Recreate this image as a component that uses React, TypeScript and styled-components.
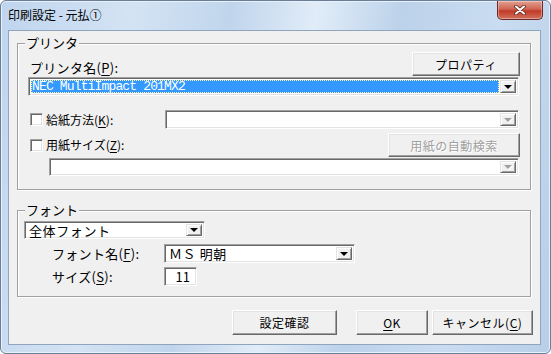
import styled, { createGlobalStyle } from "styled-components";

const UI = `"Noto Sans CJK JP", "DejaVu Sans", sans-serif`;
const MONO = `"Liberation Mono", "Noto Sans CJK JP", monospace`;

const GlobalStyle = createGlobalStyle`
  html, body {
    margin: 0;
    padding: 0;
    background: #ffffff;
  }
  * {
    box-sizing: border-box;
  }
`;

const Window = styled.div`
  width: 551px;
  height: 354px;
  display: flex;
  flex-direction: column;
  border: 1px solid #6a7f97;
  border-radius: 6px;
  background: linear-gradient(
    100deg,
    #bfd5ee 0%,
    #d4e3f4 22%,
    #c0d5ec 38%,
    #e1ecf8 52%,
    #bcd2ea 66%,
    #c9dcf1 82%,
    #b8cfe8 100%
  );
  box-shadow: inset 0 0 0 1px #e8f0fa;
  overflow: hidden;
`;

const TitleBar = styled.div`
  height: 29px;
  display: flex;
  align-items: flex-start;
  justify-content: space-between;
  padding-left: 7px;
`;

const Title = styled.div`
  margin-top: 7px;
  font-family: ${UI};
  font-size: 12px;
  line-height: 14px;
  color: #000;
`;

const CloseButton = styled.div`
  width: 46px;
  height: 19px;
  margin-right: 7px;
  display: flex;
  align-items: center;
  justify-content: center;
  border: 1px solid #6b2a26;
  border-top: none;
  border-radius: 0 0 5px 5px;
  background: linear-gradient(180deg, #e3a091 0%, #cf6454 45%, #c23a26 55%, #d0705d 100%);
  box-shadow: inset 0 0 0 1px rgba(255, 255, 255, 0.35);
`;

const Client = styled.div`
  margin-left: 7px;
  width: 533px;
  height: 315px;
  border: 1px solid #8fa5bd;
  background: #f0f0f0;
  display: flex;
  flex-direction: column;
  padding-left: 8px;
`;

const Group = styled.div<{ $h: number; $mt: number; $pad: string }>`
  position: relative;
  width: 514px;
  height: ${({ $h }) => $h}px;
  margin-top: ${({ $mt }) => $mt}px;
  padding: ${({ $pad }) => $pad};
  border: 1px solid #a0a0a0;
  box-shadow: inset 1px 1px 0 #ffffff, 1px 1px 0 #ffffff;
  display: flex;
  flex-direction: column;
`;

const Legend = styled.span`
  position: absolute;
  left: 7px;
  top: -9px;
  padding: 0 1px;
  background: #f0f0f0;
  font-family: ${UI};
  font-size: 13px;
  line-height: 16px;
  color: #000;
`;

const Row = styled.div<{ $h: number; $mt?: number; $ml?: number }>`
  display: flex;
  align-items: center;
  height: ${({ $h }) => $h}px;
  margin-top: ${({ $mt }) => $mt ?? 0}px;
  margin-left: ${({ $ml }) => $ml ?? 0}px;
`;

const Label = styled.span<{ $size?: number; $w?: number; $ml?: number; $self?: string }>`
  font-family: ${UI};
  font-size: ${({ $size }) => $size ?? 13}px;
  line-height: 16px;
  color: #000;
  white-space: nowrap;
  letter-spacing: ${({ $size }) => ($size === 12 ? 0 : 0.3)}px;
  width: ${({ $w }) => ($w ? `${$w}px` : "auto")};
  margin-left: ${({ $ml }) => $ml ?? 0}px;
  align-self: ${({ $self }) => $self ?? "auto"};
`;

const Mn = styled.span`
  text-decoration: underline;
  text-underline-offset: 2px;
`;

const Button = styled.div<{ $w: number; $h: number; $disabled?: boolean; $ml?: string }>`
  width: ${({ $w }) => $w}px;
  height: ${({ $h }) => $h}px;
  margin-left: ${({ $ml }) => $ml ?? "0"};
  display: flex;
  align-items: center;
  justify-content: center;
  background: #f0f0f0;
  border: 1px solid;
  border-color: #ffffff #696969 #696969 #ffffff;
  box-shadow: inset -1px -1px 0 #a0a0a0, inset 1px 1px 0 #e3e3e3;
  font-family: ${UI};
  font-size: 12px;
  color: ${({ $disabled }) => ($disabled ? "#a0a0a0" : "#000")};
  text-shadow: ${({ $disabled }) => ($disabled ? "1px 1px 0 #ffffff" : "none")};
  letter-spacing: 0.5px;
  white-space: nowrap;
`;

const Combo = styled.div<{ $w?: number; $h: number; $ml?: string }>`
  width: ${({ $w }) => ($w ? `${$w}px` : "auto")};
  flex: ${({ $w }) => ($w ? "none" : "1")};
  height: ${({ $h }) => $h}px;
  margin-left: ${({ $ml }) => $ml ?? "0"};
  display: flex;
  align-items: stretch;
  padding: 2px;
  background: #ffffff;
  border: 1px solid;
  border-color: #a0a0a0 #ffffff #ffffff #a0a0a0;
  box-shadow: inset 1px 1px 0 #696969, inset -1px -1px 0 #e3e3e3;
`;

const ComboText = styled.div<{ $selected?: boolean; $mono?: boolean }>`
  flex: 1;
  display: flex;
  align-items: center;
  padding-left: ${({ $selected }) => ($selected ? 1 : 2)}px;
  margin-right: 1px;
  font-family: ${({ $mono }) => ($mono ? MONO : UI)};
  font-size: 13px;
  letter-spacing: ${({ $mono }) => ($mono ? "-0.85px" : "0.6px")};
  color: ${({ $selected }) => ($selected ? "#ffffff" : "#000")};
  background: ${({ $selected }) => ($selected ? "#3399ff" : "transparent")};
  outline: ${({ $selected }) => ($selected ? "1px dotted #fff3a0" : "none")};
  outline-offset: -1px;
  white-space: nowrap;
`;

const ComboArrow = styled.div<{ $disabled?: boolean }>`
  width: 16px;
  display: flex;
  align-items: center;
  justify-content: center;
  background: #f0f0f0;
  border: 1px solid;
  border-color: #e3e3e3 #696969 #696969 #e3e3e3;
  box-shadow: inset 1px 1px 0 #ffffff, inset -1px -1px 0 #a0a0a0;

  &::after {
    content: "";
    width: 0;
    height: 0;
    border-left: 4px solid transparent;
    border-right: 4px solid transparent;
    border-top: 4px solid ${({ $disabled }) => ($disabled ? "#a0a0a0" : "#000")};
    filter: ${({ $disabled }) => ($disabled ? "drop-shadow(1px 1px 0 #fff)" : "none")};
  }
`;

const Check = styled.div<{ $ml?: number }>`
  width: 13px;
  height: 13px;
  margin-left: ${({ $ml }) => $ml ?? 0}px;
  margin-right: 3px;
  background: #ffffff;
  border: 1px solid;
  border-color: #a0a0a0 #ffffff #ffffff #a0a0a0;
  box-shadow: inset 1px 1px 0 #696969, inset -1px -1px 0 #e3e3e3;
`;

const SizeInput = styled.div`
  width: 33px;
  height: 19px;
  display: flex;
  align-items: center;
  justify-content: flex-end;
  padding-right: 6px;
  background: #ffffff;
  border: 1px solid;
  border-color: #a0a0a0 #ffffff #ffffff #a0a0a0;
  box-shadow: inset 1px 1px 0 #696969, inset -1px -1px 0 #e3e3e3;
  font-family: ${UI};
  font-size: 13px;
  color: #000;
`;

const ButtonRow = styled.div`
  display: flex;
  justify-content: flex-end;
  margin-top: 13px;
  padding-right: 7px;
`;

const CloseIcon = () => (
  <svg width="12" height="10" viewBox="0 0 12 10">
    <path d="M2 1.5 L10 8.5 M10 1.5 L2 8.5" stroke="#5a2620" strokeWidth="3.6" strokeLinecap="round" />
    <path d="M2 1.5 L10 8.5 M10 1.5 L2 8.5" stroke="#ffffff" strokeWidth="2" strokeLinecap="round" />
  </svg>
);

const App = () => {
  return (
    <>
      <GlobalStyle />
      <Window>
        <TitleBar>
          <Title>印刷設定 - 元払①</Title>
          <CloseButton>
            <CloseIcon />
          </CloseButton>
        </TitleBar>
        <Client>
          <Group $h={147} $mt={12} $pad="8px 11px 0 10px">
            <Legend>プリンタ</Legend>
            <Row $h={24} style={{ justifyContent: "space-between" }}>
              <Label $ml={2} $self="flex-end">
                プリンタ名(<Mn>P</Mn>):
              </Label>
              <Button $w={108} $h={24} style={{ marginRight: -1 }}>
                プロパティ
              </Button>
            </Row>
            <Row $h={19} $mt={1}>
              <Combo $h={19}>
                <ComboText $selected $mono>
                  NEC MultiImpact 201MX2
                </ComboText>
                <ComboArrow />
              </Combo>
            </Row>
            <Row $h={19} $mt={14}>
              <Check $ml={2} />
              <Label $size={12}>
                給紙方法(<Mn>K</Mn>):
              </Label>
              <Combo $w={354} $h={19} $ml="auto">
                <ComboText />
                <ComboArrow $disabled />
              </Combo>
            </Row>
            <Row $h={24} $mt={4}>
              <Check $ml={2} />
              <Label $size={12}>
                用紙サイズ(<Mn>Z</Mn>):
              </Label>
              <Button $w={132} $h={24} $disabled $ml="auto" style={{ marginRight: -1 }}>
                用紙の自動検索
              </Button>
            </Row>
            <Row $h={18} $mt={1} $ml={21}>
              <Combo $h={18}>
                <ComboText />
                <ComboArrow $disabled />
              </Combo>
            </Row>
          </Group>

          <Group $h={87} $mt={20} $pad="0">
            <Legend>フォント</Legend>
            <Row $h={18} $mt={10} $ml={6}>
              <Combo $w={181} $h={18}>
                <ComboText>全体フォント</ComboText>
                <ComboArrow />
              </Combo>
            </Row>
            <Row $h={19} $mt={5} $ml={34}>
              <Label $w={112}>
                フォント名(<Mn>F</Mn>):
              </Label>
              <Combo $w={191} $h={19}>
                <ComboText>ＭＳ 明朝</ComboText>
                <ComboArrow />
              </Combo>
            </Row>
            <Row $h={19} $mt={4} $ml={34}>
              <Label $w={112}>
                サイズ(<Mn>S</Mn>):
              </Label>
              <SizeInput>11</SizeInput>
            </Row>
          </Group>

          <ButtonRow>
            <Button $w={105} $h={25}>
              設定確認
            </Button>
            <Button $w={72} $h={25} $ml="19px">
              <Mn>O</Mn>K
            </Button>
            <Button $w={101} $h={25} $ml="4px">
              キャンセル(<Mn>C</Mn>)
            </Button>
          </ButtonRow>
        </Client>
      </Window>
    </>
  );
};

export default App;
